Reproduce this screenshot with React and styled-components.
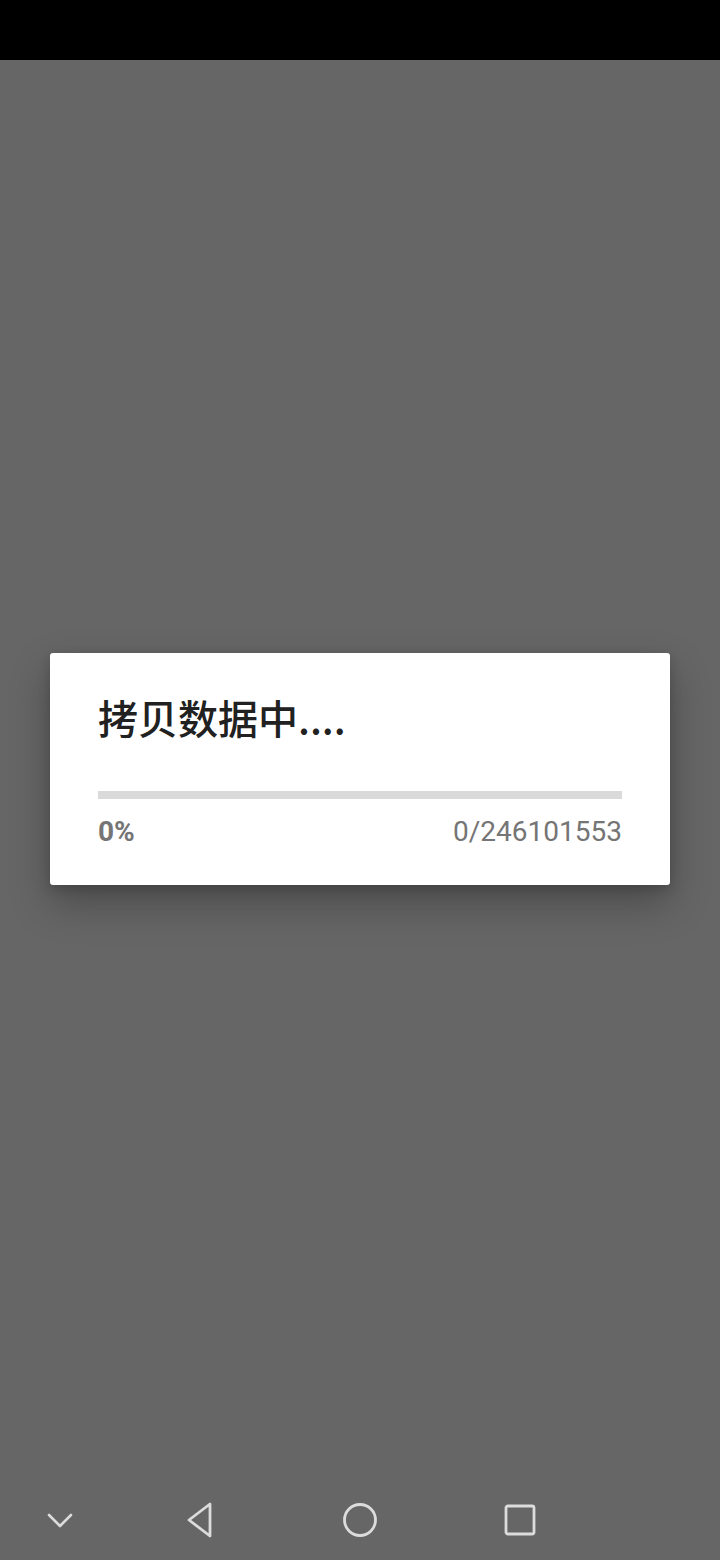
import React from 'react'
import styled, { createGlobalStyle } from 'styled-components'

const Global = createGlobalStyle`
  html, body {
    margin: 0;
    padding: 0;
    background: #666666;
  }
  body {
    font-family: Roboto, "Noto Sans CJK SC", sans-serif;
  }
`

const Screen = styled.div`
  width: 720px;
  height: 1560px;
  display: flex;
  flex-direction: column;
  background: #666666;
  overflow: hidden;
`

const StatusBar = styled.div`
  height: 60px;
  flex-shrink: 0;
  background: #000;
`

const Content = styled.main`
  flex: 1;
  display: flex;
  align-items: center;
  justify-content: center;
  padding-bottom: 2px;
`

const Dialog = styled.section`
  width: 620px;
  box-sizing: border-box;
  padding: 40px 48px 37px;
  background: #fff;
  border-radius: 3px;
  box-shadow: 0 18px 40px rgba(0, 0, 0, 0.28), 0 4px 12px rgba(0, 0, 0, 0.16);
`

const Title = styled.h2`
  margin: 0;
  font-family: "Noto Sans CJK SC", "Noto Sans", sans-serif;
  font-size: 40px;
  line-height: 48px;
  font-weight: 500;
  color: #212121;
`

const Track = styled.div`
  margin-top: 50px;
  height: 8px;
  background: #dadada;
  overflow: hidden;
`

const Fill = styled.div`
  height: 100%;
  background: #009688;
`

const Row = styled.div`
  margin-top: 17px;
  display: flex;
  justify-content: space-between;
  font-family: Roboto, sans-serif;
  font-size: 28px;
  line-height: 32px;
  color: #757575;
`

const Percent = styled.span`
  font-weight: 700;
`

const Count = styled.span`
  font-weight: 400;
`

const NavBar = styled.nav`
  height: 80px;
  flex-shrink: 0;
  display: flex;
  align-items: center;
`

const NavSlot = styled.div`
  width: ${p => p.w}px;
  display: flex;
  justify-content: center;
  align-items: center;
`

const stroke = '#dcdcdc'

export default function App() {
  const done = 0
  const total = 246101553
  const pct = total ? Math.floor((done / total) * 100) : 0
  return (
    <Screen>
      <Global />
      <StatusBar />
      <Content>
        <Dialog>
          <Title>拷贝数据中....</Title>
          <Track>
            <Fill style={{ width: `${pct}%` }} />
          </Track>
          <Row>
            <Percent>{pct}%</Percent>
            <Count>{done}/{total}</Count>
          </Row>
        </Dialog>
      </Content>
      <NavBar>
        <NavSlot w={120}>
          <svg width="28" height="18" viewBox="0 0 28 18">
            <path d="M3 4 L14 15 L25 4" fill="none" stroke={stroke} strokeWidth="2.6" strokeLinecap="round" strokeLinejoin="round" />
          </svg>
        </NavSlot>
        <NavSlot w={160}>
          <svg width="34" height="38" viewBox="0 0 34 38">
            <path d="M27 3 L27 35 L6 19 Z" fill="none" stroke={stroke} strokeWidth="2.8" strokeLinejoin="round" />
          </svg>
        </NavSlot>
        <NavSlot w={160}>
          <svg width="36" height="36" viewBox="0 0 36 36">
            <circle cx="18" cy="18" r="15.5" fill="none" stroke={stroke} strokeWidth="2.8" />
          </svg>
        </NavSlot>
        <NavSlot w={160}>
          <svg width="34" height="34" viewBox="0 0 34 34">
            <rect x="3" y="3" width="28" height="28" rx="2" fill="none" stroke={stroke} strokeWidth="2.8" />
          </svg>
        </NavSlot>
      </NavBar>
    </Screen>
  )
}
